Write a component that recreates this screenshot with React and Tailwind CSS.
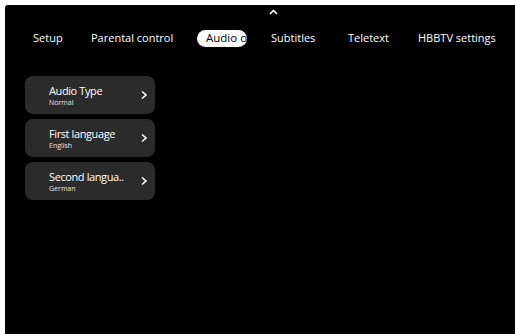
import React from 'react';

const items = [
  { title: 'Audio Type', value: 'Normal' },
  { title: 'First language', value: 'English' },
  { title: 'Second langua..', value: 'German' },
];

function Chevron() {
  return (
    <svg width="8" height="10" viewBox="0 0 8 10" fill="none" stroke="#ffffff" strokeWidth="1.6">
      <path d="M2 1.5 L6 5 L2 8.5" />
    </svg>
  );
}

export default function App() {
  return (
    <div className="w-[515px] h-[334px] bg-white pt-[5px] pl-[5px] overflow-hidden" style={{ fontFamily: '"Open Sans", "Noto Sans", sans-serif' }}>
      <div className="w-full h-full bg-black rounded-tl-[3px] flex flex-col">
        {/* caret */}
        <div className="h-[22px] flex justify-start pl-[264px] pt-[4px]">
          <svg width="9" height="6" viewBox="0 0 9 6" fill="none" stroke="#ffffff" strokeWidth="1.6">
            <path d="M1 5 L4.5 1.5 L8 5" />
          </svg>
        </div>
        {/* tabs */}
        <div className="flex items-center h-[22px] pl-[28px] text-[11px] text-white">
          <span className="w-[58px]">Setup</span>
          <span className="w-[106px]">Parental control</span>
          <span className="w-[50px] h-[17px] bg-white text-black rounded-full flex items-center pl-[9px] overflow-hidden whitespace-nowrap mr-[24px] text-[11.5px]">Audio o</span>
          <span className="w-[77px]">Subtitles</span>
          <span className="w-[70px]">Teletext</span>
          <span>HBBTV settings</span>
        </div>
        {/* list */}
        <div className="flex flex-col gap-[5px] pl-[20px] pt-[27px]">
          {items.map((it) => (
            <div key={it.title} className="w-[130px] h-[38px] bg-[#2b2b2b] rounded-[8px] flex items-center pl-[24px] pr-[7px]">
              <div className="flex-1 flex flex-col leading-none">
                <span className="text-white text-[11px] tracking-[-0.4px] whitespace-nowrap">{it.title}</span>
                <span className="text-[#e5e5e5] text-[7px] mt-[3px]">{it.value}</span>
              </div>
              <Chevron />
            </div>
          ))}
        </div>
      </div>
    </div>
  );
}
